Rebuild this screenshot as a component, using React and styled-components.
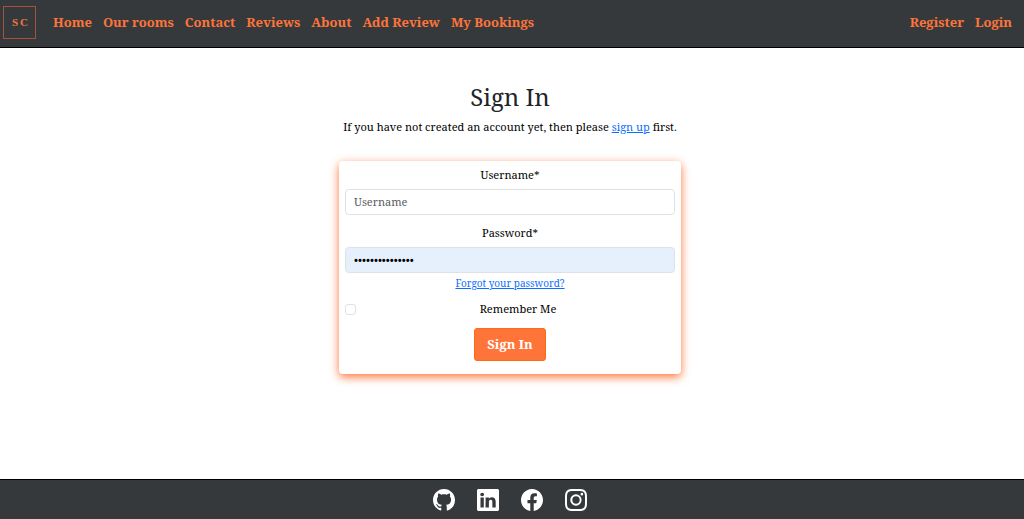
import React from "react";
import styled, { createGlobalStyle } from "styled-components";
import { BsGithub, BsLinkedin, BsFacebook, BsInstagram } from "react-icons/bs";

const GlobalStyle = createGlobalStyle`
  *, *::before, *::after { box-sizing: border-box; }
  body {
    margin: 0;
    background: #fff;
    color: #000;
    font-family: "Noto Serif", "Droid Serif", "DejaVu Serif Condensed", "DejaVu Serif", serif;
    font-size: 11px;
    line-height: 16px;
  }
`;

const Page = styled.div`
  display: flex;
  flex-direction: column;
  min-height: 100vh;
`;

const Header = styled.header`
  display: flex;
  align-items: center;
  height: 48px;
  padding: 0 12px 2px 3px;
  background: #35393c;
  border-bottom: 1px solid #000;
`;

const Brand = styled.a`
  display: flex;
  margin-right: 17px;
`;

const NavList = styled.nav`
  display: flex;
  gap: 11px;
  padding-bottom: 2px;
  margin-left: ${(p) => (p.$end ? "auto" : "0")};
`;

const NavLink = styled.a`
  color: #ff7438;
  font-size: 13px;
  font-weight: 700;
  line-height: 20px;
  text-decoration: none;
  white-space: nowrap;
`;

const Main = styled.main`
  flex: 1;
  display: flex;
  flex-direction: column;
  align-items: center;
  padding: 32px 4px 32px 0;
  text-align: center;
`;

const Title = styled.h1`
  margin: 0;
  color: #212529;
  font-size: 24px;
  font-weight: 400;
  line-height: 34px;
`;

const Intro = styled.p`
  margin: 5px 0 26px;
`;

const TextLink = styled.a`
  color: #0d6efd;
  font-size: ${(p) => (p.$small ? "10px" : "inherit")};
`;

const Card = styled.form`
  display: flex;
  flex-direction: column;
  align-items: center;
  width: 100%;
  max-width: 342px;
  padding: 6px 6px 13px;
  border-radius: 4px;
  background: #fff;
  box-shadow: 0 3px 10px #ff7438;
`;

const Field = styled.div`
  display: flex;
  flex-direction: column;
  gap: 6px;
  width: 100%;
  margin-bottom: ${(p) => (p.$last ? "2px" : "10px")};
`;

const TextInput = styled.input`
  width: 100%;
  height: 26px;
  padding: 0 8px 2px;
  border: 1px solid #dee2e6;
  border-radius: 4px;
  background: ${(p) => (p.$filled ? "#e6f0fd" : "#fff")};
  color: #000;
  font: inherit;
  &::placeholder { color: #595c5f; opacity: 1; }
`;

const CheckRow = styled.div`
  display: flex;
  align-items: center;
  width: 100%;
  margin: 10px 0 11px;
  label { flex: 1; padding-left: 5px; }
`;

const Checkbox = styled.input`
  appearance: none;
  width: 11px;
  height: 11px;
  margin: 0;
  border: 1px solid #dee2e6;
  border-radius: 3px;
  &:checked { background: #0d6efd; }
`;

const SubmitButton = styled.button`
  height: 33px;
  padding: 0 12px 2px;
  border: 1px solid #ff6a13;
  border-radius: 3px;
  background: #ff7438;
  color: #fff;
  font-family: inherit;
  font-size: 13px;
  font-weight: 700;
  line-height: 20px;
`;

const Footer = styled.footer`
  display: flex;
  justify-content: center;
  align-items: center;
  gap: 22px;
  height: 40px;
  padding: 1px 4px 0 0;
  border-top: 1px solid #000;
  background: #35393c;
`;

const SocialLink = styled.a`
  display: flex;
  color: #fff;
  font-size: 22px;
`;

const links = ["Home", "Our rooms", "Contact", "Reviews", "About", "Add Review", "My Bookings"];
const accountLinks = ["Register", "Login"];
const socials = [
  ["GitHub", BsGithub],
  ["LinkedIn", BsLinkedin],
  ["Facebook", BsFacebook],
  ["Instagram", BsInstagram],
];

function Logo() {
  return (
    <svg width="33" height="33" viewBox="0 0 33 33" role="img" aria-label="SC">
      <rect x="0.5" y="0.5" width="32" height="32" fill="none" stroke="#a2533a" />
      <text x="12" y="20" textAnchor="middle" fill="#f0763f" fontFamily="Liberation Serif, serif" fontWeight="700" fontSize="11">S</text>
      <text x="21" y="20" textAnchor="middle" fill="#f0763f" fontFamily="Liberation Serif, serif" fontWeight="700" fontSize="11">C</text>
    </svg>
  );
}

export default function App() {
  return (
    <Page>
      <GlobalStyle />
      <Header>
        <Brand href="#"><Logo /></Brand>
        <NavList aria-label="Main">
          {links.map((name) => <NavLink href="#" key={name}>{name}</NavLink>)}
        </NavList>
        <NavList aria-label="Account" $end>
          {accountLinks.map((name) => <NavLink href="#" key={name}>{name}</NavLink>)}
        </NavList>
      </Header>
      <Main>
        <Title>Sign In</Title>
        <Intro>
          If you have not created an account yet, then please <TextLink href="#">sign up</TextLink> first.
        </Intro>
        <Card onSubmit={(e) => e.preventDefault()}>
          <Field>
            <label htmlFor="username">Username*</label>
            <TextInput id="username" type="text" placeholder="Username" />
          </Field>
          <Field $last>
            <label htmlFor="password">Password*</label>
            <TextInput id="password" type="password" defaultValue="correcthorse123" $filled />
          </Field>
          <TextLink href="#" $small>Forgot your password?</TextLink>
          <CheckRow>
            <Checkbox id="remember" type="checkbox" />
            <label htmlFor="remember">Remember Me</label>
          </CheckRow>
          <SubmitButton type="submit">Sign In</SubmitButton>
        </Card>
      </Main>
      <Footer>
        {socials.map(([name, Icon]) => (
          <SocialLink href="#" aria-label={name} key={name}><Icon /></SocialLink>
        ))}
      </Footer>
    </Page>
  );
}
